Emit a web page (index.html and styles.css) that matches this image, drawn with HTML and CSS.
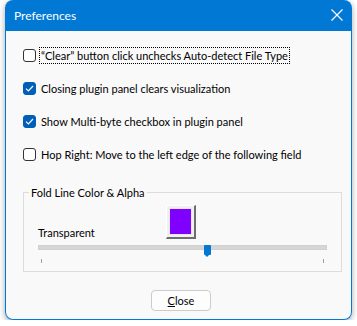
FILE: index.html
```html
<!DOCTYPE html>
<html lang="en">
  <head>
    <title>Preferences</title>
    <link rel="stylesheet" href="styles.css">
  </head>
  <body>
    <div class="window">
      <div class="titlebar">
        <span class="title">Preferences</span>
        <svg class="close-x" width="12" height="12" viewBox="0 0 12 12">
          <path d="M0.5 0.5 L11.5 11.5 M11.5 0.5 L0.5 11.5" stroke="#fff" stroke-width="1.2" fill="none" />
        </svg>
      </div>
      <div class="content">
        <div class="options">
          <label class="option">
            <span class="box"></span>
            <span class="text focused">“Clear” button click unchecks Auto-detect File Type</span>
          </label>
          <label class="option">
            <span class="box checked">
              <svg width="9" height="7" viewBox="0 0 9 7"><path d="M1 3.6 L3.4 6 L8 1" stroke="#fff" stroke-width="1.2" fill="none" /></svg>
            </span>
            <span class="text">Closing plugin panel clears visualization</span>
          </label>
          <label class="option">
            <span class="box checked">
              <svg width="9" height="7" viewBox="0 0 9 7"><path d="M1 3.6 L3.4 6 L8 1" stroke="#fff" stroke-width="1.2" fill="none" /></svg>
            </span>
            <span class="text">Show Multi-byte checkbox in plugin panel</span>
          </label>
          <label class="option">
            <span class="box"></span>
            <span class="text">Hop Right: Move to the left edge of the following field</span>
          </label>
        </div>

        <fieldset class="group">
          <legend>Fold Line Color &amp; Alpha</legend>
          <div class="color-row">
            <span class="alpha-label">Transparent</span>
            <span class="swatch"><span class="swatch-fill"></span></span>
          </div>
          <div class="slider">
            <div class="track"></div>
            <div class="thumb" style="left: 166px;"></div>
          </div>
          <div class="ticks">
            <span class="tick"></span>
            <span class="tick"></span>
          </div>
        </fieldset>

        <div class="footer">
          <button class="button"><u>C</u>lose</button>
        </div>
      </div>
    </div>
  </body>
</html>
```

FILE: styles.css
```css
body {
  margin: 0;
  background: #ffffff;
  font-family: Lato, "Noto Sans", sans-serif;
  font-size: 11px;
  color: #000000;
}
.window {
  width: 347px;
  margin-left: 5px;
  box-shadow: 0 2px 6px rgba(0, 0, 0, 0.35);
  border-radius: 8px 8px 8px 8px;
}
.titlebar {
  height: 31px;
  background: #0078d4;
  border-radius: 8px 8px 0 0;
  display: flex;
  align-items: center;
  justify-content: space-between;
  padding: 0 9px 0 9px;
  color: #ffffff;
}
.title {
  font-size: 12px;
  margin-top: -1px;
}
.close-x {
  margin-top: -2px;
}
.content {
  background: #f9f9f9;
  border: 1px solid #0078d4;
  border-top: none;
  border-radius: 0 0 8px 8px;
  height: 288px;
  display: flex;
  flex-direction: column;
}
.options {
  display: flex;
  flex-direction: column;
  gap: 17px;
  padding: 16px 0 0 17px;
}
.option {
  display: flex;
  align-items: center;
  height: 16px;
}
.box {
  width: 11px;
  height: 11px;
  border: 1px solid #333333;
  border-radius: 3px;
  background: #ffffff;
  display: flex;
  align-items: center;
  justify-content: center;
  margin-right: 4px;
}
.box.checked {
  background: #005fb8;
  border-color: #005fb8;
}
.text {
  padding: 1px 1px;
  white-space: nowrap;
}
.text.focused {
  outline: 1px dotted #000000;
  outline-offset: 0;
}
.group {
  margin: 24px 9px 0 17px;
  border: 1px solid #dcdcdc;
  padding: 6px 14px 0 14px;
  height: 78px;
}
.group legend {
  padding: 0 2px;
  margin-left: -9px;
}
.color-row {
  display: flex;
  align-items: flex-end;
}
.alpha-label {
  width: 128px;
}
.swatch {
  border-top: 1px solid #ffffff;
  border-left: 1px solid #ffffff;
  border-right: 2px solid #6d6d6d;
  border-bottom: 2px solid #6d6d6d;
  background: #f0f0f0;
  display: flex;
  padding: 2px;
  box-sizing: border-box;
  width: 30px;
  height: 34px;
}
.swatch-fill {
  flex: 1;
  background: #8000ff;
  border: 1px solid #e6e6e6;
}
.slider {
  position: relative;
  height: 12px;
  margin-top: 6px;
}
.track {
  margin-top: 3px;
  height: 3px;
  background: #d6d6d6;
  border: 1px solid #d0d0d0;
}
.thumb {
  position: absolute;
  top: 0;
  width: 7px;
  height: 10px;
  background: #0078d4;
  border-radius: 1px;
}
.thumb::after {
  content: "";
  position: absolute;
  left: 1px;
  top: 10px;
  border-left: 2.5px solid transparent;
  border-right: 2.5px solid transparent;
  border-top: 2px solid #0078d4;
}
.ticks {
  display: flex;
  justify-content: space-between;
  padding: 2px 3px 0 3px;
}
.tick {
  width: 1px;
  height: 4px;
  background: #a0a0a0;
}
.footer {
  display: flex;
  justify-content: center;
  padding: 18px 0 0 5px;
}
.button {
  width: 60px;
  height: 21px;
  background: #fdfdfd;
  border: 1px solid #cccccc;
  border-radius: 4px;
  font-family: Lato, "Noto Sans", sans-serif;
  font-size: 11px;
  color: #000000;
  padding: 0;
}
```
